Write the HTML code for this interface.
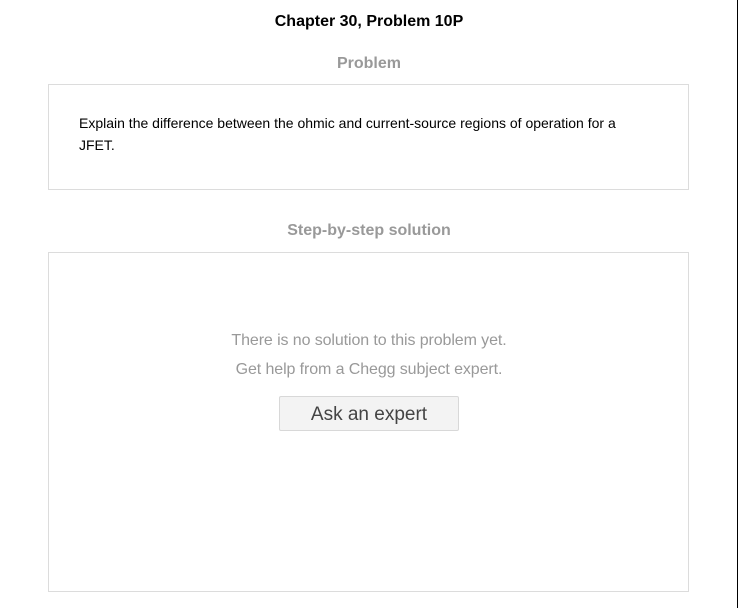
<!DOCTYPE html>
<html><head><style>
body{margin:0;width:738px;height:608px;background:#fff;font-family:"Liberation Sans",Arial,sans-serif;position:relative;overflow:hidden}
.rb{position:absolute;right:0;top:0;width:1px;height:608px;background:#000}
.t{position:absolute;left:0;width:738px;text-align:center}
.box{position:absolute;left:48px;width:639px;border:1px solid #dcdcdc}
</style></head><body>
<div class="rb"></div>
<div class="t" style="top:13px;font-size:16px;font-weight:bold;color:#000">Chapter 30, Problem 10P</div>
<div class="t" style="top:55px;font-size:16px;font-weight:bold;color:#999">Problem</div>
<div class="box" style="top:84px;height:104px">
<div style="position:absolute;left:30px;top:27px;width:570px;font-size:14px;line-height:22px;color:#000">Explain the difference between the ohmic and current-source regions of operation for a JFET.</div>
</div>
<div class="t" style="top:222px;font-size:16px;font-weight:bold;color:#999">Step-by-step solution</div>
<div class="box" style="top:252px;height:338px"></div>
<div class="t" style="top:332px;font-size:16px;letter-spacing:-0.1px;color:#999">There is no solution to this problem yet.</div>
<div class="t" style="top:361px;font-size:16px;letter-spacing:-0.1px;color:#999">Get help from a Chegg subject expert.</div>
<div style="position:absolute;left:279px;top:396px;width:178px;height:33px;border:1px solid #d8d8d8;border-radius:2px;background:#f3f3f3;text-align:center;line-height:36px;font-size:19px;color:#444">Ask an expert</div>
</body></html>
